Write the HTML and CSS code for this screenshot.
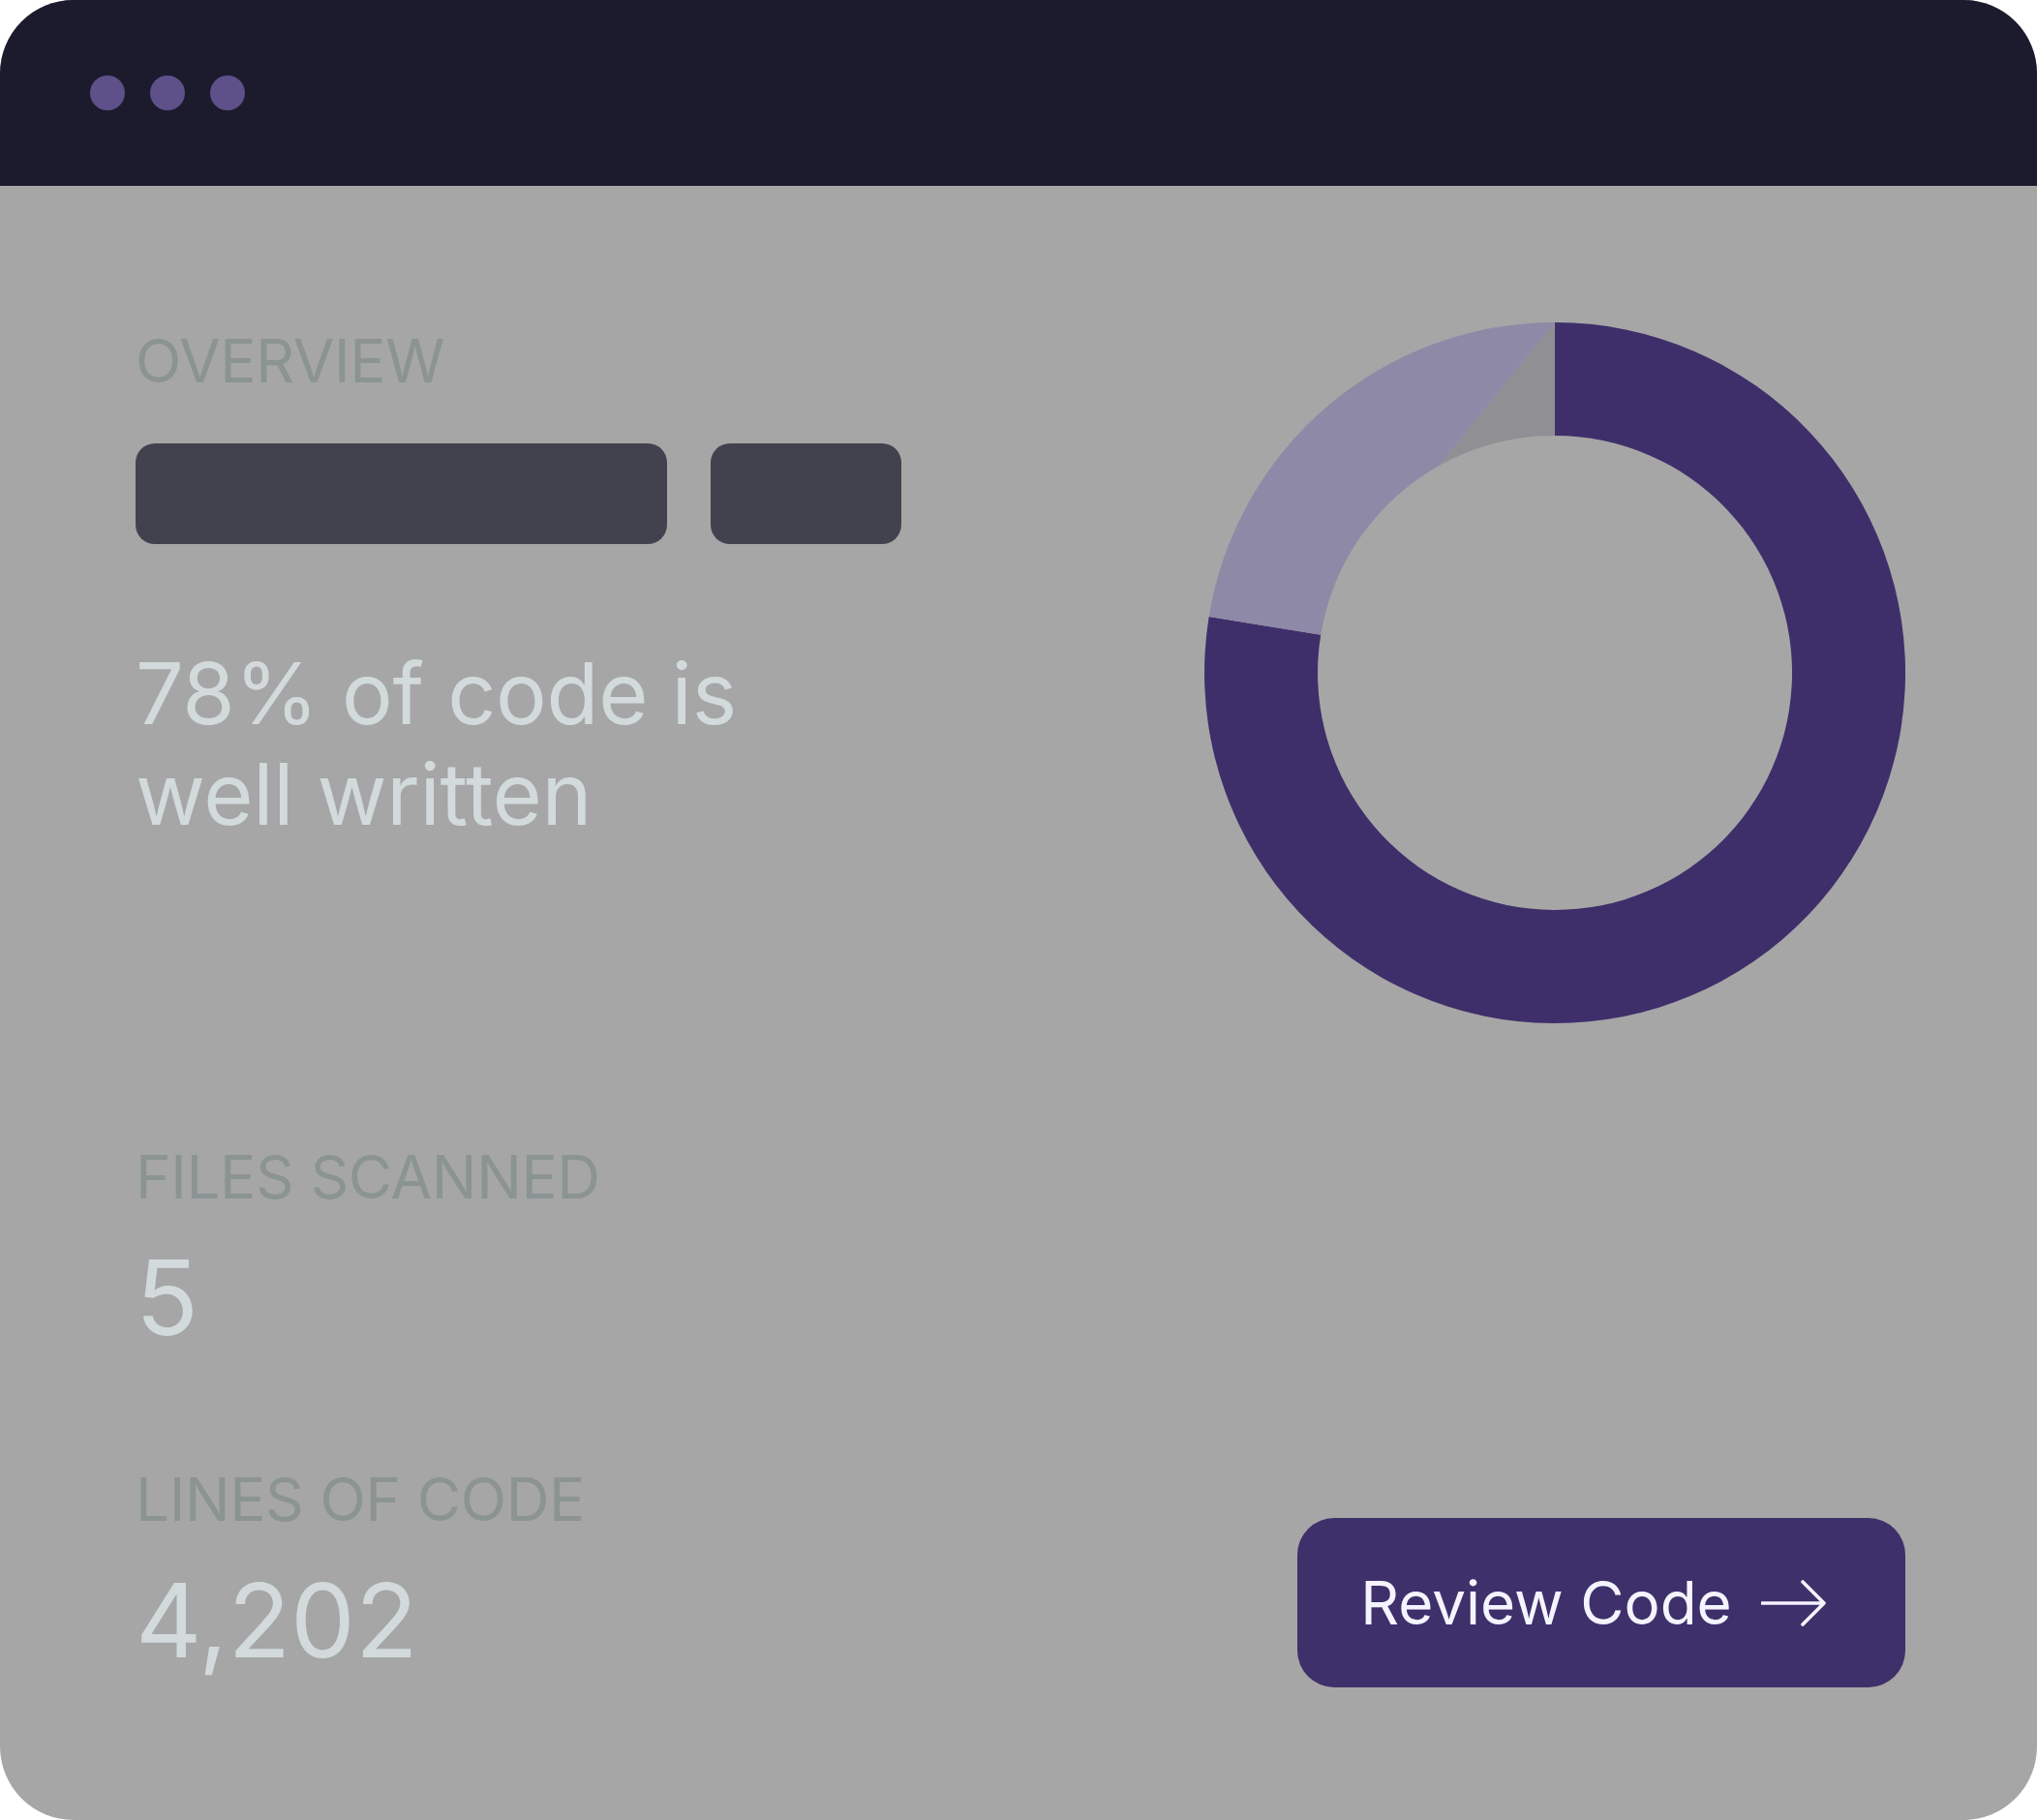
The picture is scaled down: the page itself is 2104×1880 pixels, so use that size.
FILE: index.html
```html
<!DOCTYPE html>
<html lang="en">
<head>
<meta charset="utf-8">
<title>Code Overview</title>
<link rel="stylesheet" href="styles.css">
</head>
<body>
<div class="window">
  <header class="titlebar">
    <span class="dot"></span>
    <span class="dot"></span>
    <span class="dot"></span>
  </header>
  <main class="content">
    <section class="left">
      <div class="label overview">OVERVIEW</div>
      <div class="bars">
        <div class="bar bar-wide"></div>
        <div class="bar bar-narrow"></div>
      </div>
      <p class="headline">78% of code is<br>well written</p>
      <div class="label files">FILES SCANNED</div>
      <div class="stat stat-files">5</div>
      <div class="label lines">LINES OF CODE</div>
      <div class="stat stat-lines">4,202</div>
    </section>
    <section class="right">
      <svg class="donut" width="724" height="724" viewBox="-362 -362 724 724" aria-hidden="true">
        <path class="seg-good" d="M0,-362 A362,362 0 1 1 -357.3,-57.9 L-241.8,-39.2 A245,245 0 1 0 0,-245 Z"/>
        <path class="seg-mid" d="M-357.3,-57.9 A362,362 0 0 1 0,-362 L-119.9,-213.7 A245,245 0 0 0 -241.8,-39.2 Z"/>
        <path class="seg-rest" d="M0,-362 L0,-245 A245,245 0 0 0 -119.9,-213.7 Z"/>
      </svg>
      <button class="review-btn" type="button">
        <span>Review Code</span>
        <svg class="arrow" width="68" height="50" viewBox="0 0 68 50" aria-hidden="true">
          <path d="M1 25 H65 M43 3 L65 25 L43 47" fill="none" stroke="currentColor" stroke-width="3.6" stroke-linecap="round" stroke-linejoin="round"/>
        </svg>
      </button>
    </section>
  </main>
</div>
</body>
</html>
```
FILE: styles.css
```css
html, body {
  margin: 0;
  padding: 0;
  background: #ffffff;
}

body {
  font-family: Inter, "Noto Sans", "Liberation Sans", sans-serif;
}

.window {
  width: 2104px;
  height: 1880px;
  border-radius: 76px;
  overflow: hidden;
  background: #a6a6a6;
  display: flex;
  flex-direction: column;
}

.titlebar {
  height: 192px;
  flex: 0 0 192px;
  background: #1c1b2e;
  display: flex;
  align-items: center;
  gap: 26px;
  padding-left: 93px;
  box-sizing: border-box;
}

.dot {
  width: 36px;
  height: 36px;
  border-radius: 50%;
  background: #5e5089;
}

.content {
  flex: 1;
  display: flex;
  justify-content: space-between;
  padding: 141px 136px 137px 140px;
  box-sizing: border-box;
}

.left {
  display: flex;
  flex-direction: column;
}

.label {
  font-size: 62px;
  line-height: 62px;
  color: #8b9493;
  font-weight: 400;
  letter-spacing: -0.4px;
}

.overview {
  margin-top: 9px;
}

.bars {
  display: flex;
  gap: 45px;
  margin-top: 54px;
}

.bar {
  height: 104px;
  background: #42424f;
  border-radius: 20px;
}

.bar-wide {
  width: 549px;
}

.bar-narrow {
  width: 197px;
}

.headline {
  margin: 102px 0 0;
  font-size: 88px;
  line-height: 104px;
  color: #d2dadb;
  font-weight: 400;
  letter-spacing: -0.3px;
}

.files {
  margin-top: 313px;
}

.stat {
  font-size: 107px;
  line-height: 107px;
  color: #d2dadb;
  font-weight: 400;
}

.stat-files {
  margin-top: 40px;
}

.lines {
  margin-top: 124px;
}

.stat-lines {
  margin-top: 41px;
  font-size: 106px;
  line-height: 106px;
}

.right {
  display: flex;
  flex-direction: column;
  align-items: flex-end;
}

.donut {
  display: block;
}

.seg-good {
  fill: #3e2f6b;
}

.seg-mid {
  fill: #8f89a8;
}

.seg-rest {
  fill: #8f8f94;
}

.review-btn {
  margin-top: auto;
  width: 628px;
  height: 175px;
  border: none;
  border-radius: 38px;
  background: #3e306a;
  color: #f4f4ff;
  font-family: Inter, "Noto Sans", "Liberation Sans", sans-serif;
  font-size: 62px;
  font-weight: 400;
  display: flex;
  align-items: center;
  justify-content: center;
  gap: 30px;
  padding: 0 16px 0 0;
}

.arrow {
  display: block;
}
```
